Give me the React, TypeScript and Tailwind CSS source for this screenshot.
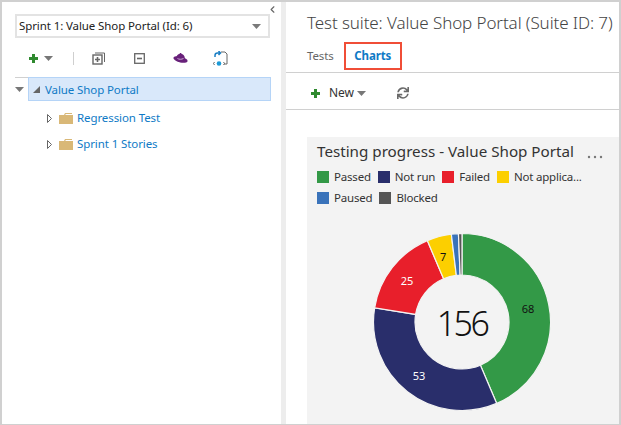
import React from 'react';
import { ChevronLeft } from 'lucide-react';
import { FaSync } from 'react-icons/fa';

const font = { fontFamily: '"Noto Sans", "Open Sans", sans-serif' };

// donut geometry, clockwise from 12 o'clock
const segments = [
  { value: 68, color: '#339947' },
  { value: 53, color: '#292e6b' },
  { value: 25, color: '#e81f2b' },
  { value: 7, color: '#fccf00' },
  { value: 2, color: '#3a73ba' },
  { value: 1, color: '#555555' },
];

function arcPath(cx: number, cy: number, r: number, r2: number, a0: number, a1: number) {
  const pt = (rad: number, a: number) => [cx + rad * Math.sin(a), cy - rad * Math.cos(a)];
  const [x0, y0] = pt(r, a0);
  const [x1, y1] = pt(r, a1);
  const [x2, y2] = pt(r2, a1);
  const [x3, y3] = pt(r2, a0);
  const large = a1 - a0 > Math.PI ? 1 : 0;
  return `M${x0} ${y0}A${r} ${r} 0 ${large} 1 ${x1} ${y1}L${x2} ${y2}A${r2} ${r2} 0 ${large} 0 ${x3} ${y3}Z`;
}

function Donut() {
  let total = 0;
  return (
    <svg width="180" height="180" viewBox="0 0 180 180" className="block">
      {segments.map((s) => {
        const a0 = (total / 156) * Math.PI * 2;
        total += s.value;
        const a1 = (total / 156) * Math.PI * 2;
        return (
          <path
            key={s.color}
            d={arcPath(90, 90, 88.5, 47, a0, a1)}
            fill={s.color}
            stroke="#f3f3f3"
            strokeWidth="1.2"
          />
        );
      })}
    </svg>
  );
}

function Caret({ className }: { className: string }) {
  return (
    <svg width="9" height="5" viewBox="0 0 9 5" className={className}>
      <path d="M0 0h9L4.500 5z" fill="currentColor" />
    </svg>
  );
}

function GreenPlus() {
  return (
    <svg width="9" height="9" viewBox="0 0 9 9" className="shrink-0">
      <path d="M3 0h3v3h3v3H6v3H3V6H0V3h3z" fill="#2f8a2f" />
    </svg>
  );
}

function Legend({ color, label }: { color: string; label: string }) {
  return (
    <div className="flex items-center gap-[5px]">
      <span className="w-3 h-3" style={{ backgroundColor: color }} />
      <span>{label}</span>
    </div>
  );
}

function FolderRow({ label }: { label: string }) {
  return (
    <div className="flex items-center h-[26px] pl-[45px]">
      <svg width="5" height="9" viewBox="0 0 5 9" className="text-[#666]">
        <path d="M0.500 0.500L4.500 4.500L0.500 8.500z" fill="#fff" stroke="currentColor" />
      </svg>
      <svg width="14" height="11" viewBox="0 0 14 11" className="ml-[7px]">
        <path d="M0 2h5l1-2h7v1H7L6 2h8v9H0z" fill="#d9b877" />
      </svg>
      <span className="ml-[4px] text-[#0f7ac6]">{label}</span>
    </div>
  );
}

export default function App() {
  return (
    <div
      style={font}
      className="w-[621px] h-[425px] flex overflow-hidden bg-white border-t-2 border-l-2 border-r-2 border-b border-[#d0d0d0] text-[11.5px] tracking-[-0.1px] text-[#333]"
    >
      <div className="w-[279px] shrink-0 flex flex-col relative">
        <ChevronLeft className="absolute left-[265px] top-[2px] text-[#666]" size={11} strokeWidth={2.5} />
        <div className="mt-[12px] ml-[13px] w-[255px] h-[24px] border-2 border-[#e3e3e3] flex items-center justify-between pl-[2px] pr-[7px]">
          <span className="text-[#222]">Sprint 1: Value Shop Portal (Id: 6)</span>
          <Caret className="text-[#7a7a7a]" />
        </div>
        <div className="flex items-center h-[39px] pt-[2px] ml-[27px]">
          <GreenPlus />
          <Caret className="ml-[6px] text-[#777]" />
          <span className="ml-[20px] w-px h-[13px] bg-[#cfcfcf]" />
          <svg width="13" height="13" viewBox="0 0 13 13" className="ml-[18px] text-[#666]" fill="none" stroke="currentColor">
            <path d="M3 1h9.500v9" />
            <rect x="1" y="3" width="9" height="9" strokeWidth="1.400" />
            <path d="M5.500 5v5M3 7.500h5" strokeWidth="1.600" />
          </svg>
          <svg width="11" height="11" viewBox="0 0 11 11" className="ml-[29px] text-[#666]" fill="none" stroke="currentColor">
            <rect x="0.700" y="0.700" width="9.600" height="9.600" strokeWidth="1.300" />
            <path d="M3 5.500h5" strokeWidth="1.600" />
          </svg>
          <svg width="15" height="11" viewBox="0 0 15 11" className="ml-[28px]">
            <ellipse cx="7.500" cy="6.500" rx="7.300" ry="2.800" transform="rotate(14 7.500 6.500)" fill="#68217a" />
            <circle cx="7.500" cy="5" r="4.300" fill="#68217a" />
            <rect x="6.800" y="0" width="1.500" height="1.500" fill="#68217a" />
            <path d="M4.500 5.500c1.500 1 4 1 6 0" stroke="#c9a8d2" fill="none" />
          </svg>
          <svg width="15" height="15" viewBox="0 0 15 15" className="ml-[25px]" fill="none">
            <path d="M8 1h4l2 2v10h-3" stroke="#666" />
            <path d="M2 6V4.500a2.500 2.500 0 0 1 2.500-2.500H7M5.500 0L7.500 2 5.500 4" stroke="#1c7fc4" strokeWidth="1.500" />
            <circle cx="6" cy="12.500" r="2.300" fill="#1c9ad6" />
            <path d="M1.500 11l-1 1.500 1 1.500M10.500 11l1 1.500-1 1.500" stroke="#666" />
          </svg>
        </div>
        <div className="ml-[13px] mr-[10px] h-px bg-[#d0d0d0]" />
        <div className="flex items-center h-[24px] -mt-px">
          <Caret className="ml-[13px] text-[#777]" />
          <div className="ml-[4px] w-[243px] h-[24px] bg-[#d9e8fa] border border-[#b5d4f7] flex items-center pl-[4px]">
            <svg width="7" height="7" viewBox="0 0 7 7" className="text-[#666]">
              <path d="M0 7L7 0v7z" fill="currentColor" />
            </svg>
            <span className="ml-[5px] pt-[2px] text-[#0f7ac6]">Value Shop Portal</span>
          </div>
        </div>
        <div className="mt-[4px] flex flex-col">
          <FolderRow label="Regression Test" />
          <FolderRow label="Sprint 1 Stories" />
        </div>
      </div>
      <div className="w-[5px] shrink-0 bg-[#ededed]" />
      <div className="flex-1 min-w-0 flex flex-col">
        <div className="h-[42px] pl-[21px] flex items-center text-[17px] font-light text-[#444] whitespace-nowrap">
          Test suite: Value Shop Portal (Suite ID: 7)
        </div>
        <div className="h-[29px] border-b border-[#d0d0d0] flex items-start pl-[21px]">
          <span className="text-[#666] mt-[3px]">Tests</span>
          <span className="ml-[10px] border-2 border-[#f04e37] h-[28px] -mt-[2px] w-[58px] flex items-center justify-center font-bold text-[#0f7ac6]">
            Charts
          </span>
        </div>
        <div className="h-[37px] border-b border-[#d0d0d0] flex items-center pl-[25px] pt-[4px]">
          <GreenPlus />
          <span className="ml-[9px] text-[12px]">New</span>
          <Caret className="ml-[3px] text-[#777]" />
          <FaSync className="ml-[31px] text-[#6a6a6a]" size={12} />
        </div>
        <div className="flex-1 pt-[27px] pl-[21px] overflow-hidden">
          <div className="bg-[#f3f3f3] h-[300px] pl-[10px]">
            <div className="flex items-center h-[28px] text-[15.200px] tracking-normal text-[#333] whitespace-nowrap">
              Testing progress - Value Shop Portal
              <svg width="16" height="4" viewBox="0 0 16 4" className="ml-[13px] mt-[12px] text-[#777]">
                <circle cx="2" cy="2" r="1.200" fill="currentColor" />
                <circle cx="8" cy="2" r="1.200" fill="currentColor" />
                <circle cx="14" cy="2" r="1.200" fill="currentColor" />
              </svg>
            </div>
            <div className="flex items-center gap-[7px] h-[21px] mt-[1px] tracking-[-0.2px]">
              <Legend color="#339947" label="Passed" />
              <Legend color="#292e6b" label="Not run" />
              <Legend color="#e81f2b" label="Failed" />
              <Legend color="#fccf00" label="Not applica..." />
            </div>
            <div className="flex items-center gap-[7px] h-[21px] tracking-[-0.2px]">
              <Legend color="#3a73ba" label="Paused" />
              <Legend color="#555555" label="Blocked" />
            </div>
            <div className="relative w-[180px] h-[180px] ml-[55px] mt-[24px]">
              <Donut />
              <span className="absolute left-[156px] top-[77px] -translate-x-1/2 -translate-y-1/2 text-[11px] text-[#111]">68</span>
              <span className="absolute left-[47px] top-[144px] -translate-x-1/2 -translate-y-1/2 text-[11px] text-white">53</span>
              <span className="absolute left-[35px] top-[49px] -translate-x-1/2 -translate-y-1/2 text-[11px] text-white">25</span>
              <span className="absolute left-[71px] top-[25px] -translate-x-1/2 -translate-y-1/2 text-[11px] text-[#111]">7</span>
              <span className="absolute inset-0 flex items-center justify-center pt-[2px] text-[34px] font-light tracking-[-2.500px] text-[#111]">156</span>
            </div>
          </div>
        </div>
      </div>
    </div>
  );
}
